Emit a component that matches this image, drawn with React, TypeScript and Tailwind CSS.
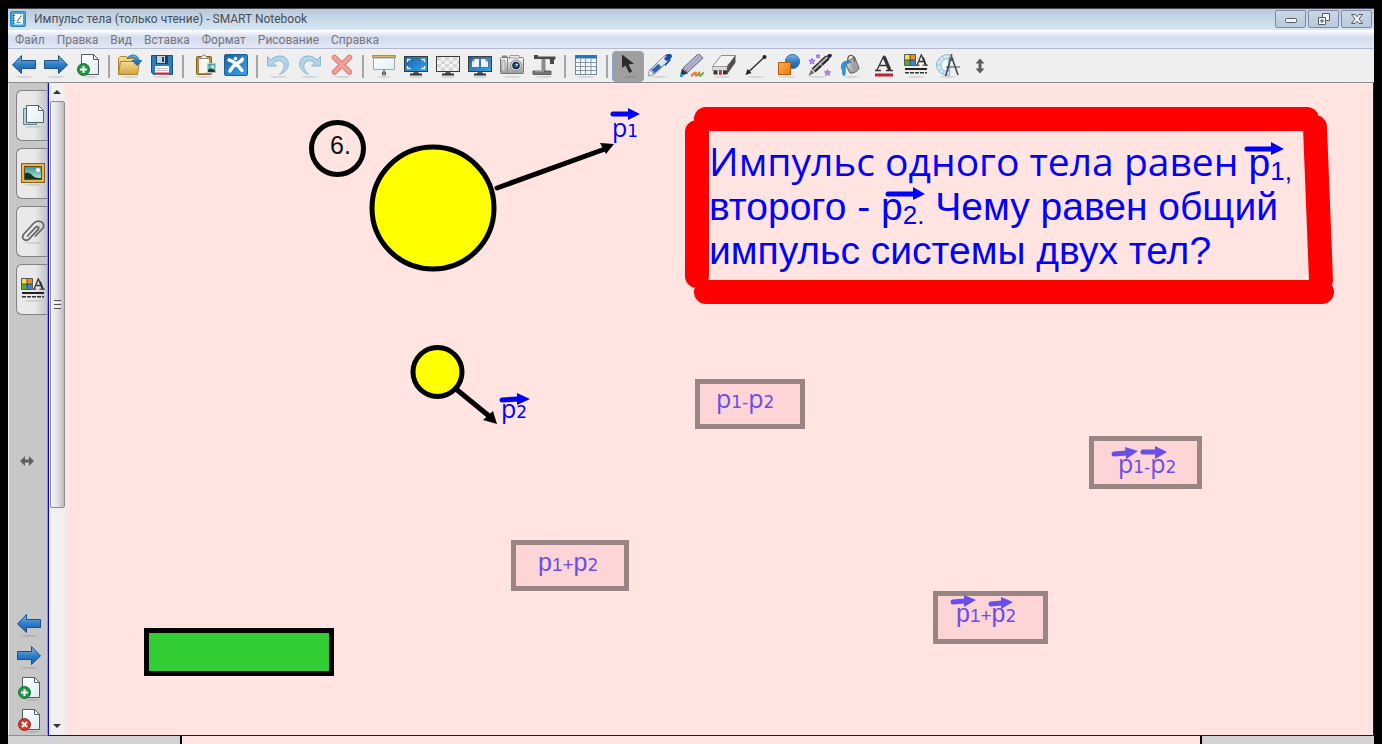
import type { ReactNode } from "react";

type Tool = { name: string; icon: ReactNode; active?: boolean };

const MENU = ["Файл", "Правка", "Вид", "Вставка", "Формат", "Рисование", "Справка"];

function Defs() {
  return (
    <svg className="absolute size-0" aria-hidden="true">
      <defs>
        <linearGradient id="blue" x1="0" y1="0" x2="0" y2="1">
          <stop offset="0" stopColor="#7dbdec" />
          <stop offset="0.5" stopColor="#2f7fc6" />
          <stop offset="1" stopColor="#1a5ea8" />
        </linearGradient>
        <linearGradient id="screen" x1="0" y1="0" x2="1" y2="1">
          <stop offset="0" stopColor="#1560a8" />
          <stop offset="1" stopColor="#3fa2e6" />
        </linearGradient>
        <linearGradient id="paper" x1="0" y1="0" x2="1" y2="1">
          <stop offset="0" stopColor="#ffffff" />
          <stop offset="1" stopColor="#dfeef5" />
        </linearGradient>
        <linearGradient id="orange" x1="0" y1="0" x2="1" y2="1">
          <stop offset="0" stopColor="#ffb347" />
          <stop offset="1" stopColor="#e9790c" />
        </linearGradient>
        <linearGradient id="folder" x1="0" y1="0" x2="0" y2="1">
          <stop offset="0" stopColor="#f8dd90" />
          <stop offset="1" stopColor="#d3a343" />
        </linearGradient>
        <linearGradient id="metal" x1="0" y1="0" x2="0" y2="1">
          <stop offset="0" stopColor="#fafafa" />
          <stop offset="1" stopColor="#9b9b9b" />
        </linearGradient>
        <linearGradient id="sunset" x1="0" y1="0" x2="0" y2="1">
          <stop offset="0" stopColor="#35989f" />
          <stop offset="1" stopColor="#bdebd7" />
        </linearGradient>
      </defs>
    </svg>
  );
}

function Icon({ children }: { children: ReactNode }) {
  return (
    <svg width="24" height="24" viewBox="0 0 24 24" fill="none" aria-hidden="true">
      {children}
    </svg>
  );
}

function Shadow({ cx = 12, rx = 9 }: { cx?: number; rx?: number }) {
  return <ellipse cx={cx} cy="22.8" rx={rx} ry="0.9" fill="#000" opacity="0.12" />;
}

function ArrowIcon({ right }: { right?: boolean }) {
  return (
    <Icon>
      <Shadow />
      <path
        d={
          right
            ? "M23.5 11 14.5 1.500v5H.5v8h14v5z"
            : "M.5 11 9.500 1.500v5h14v8h-14v5z"
        }
        fill="url(#blue)"
        stroke="#1d4f88"
        strokeLinejoin="round"
      />
    </Icon>
  );
}

function PageBadge({ remove }: { remove?: boolean }) {
  return (
    <Icon>
      <Shadow cx={15} rx={7} />
      <path d="M5.5.5h12l5 5v15h-17z" fill="url(#paper)" stroke="#555d60" />
      <path d="M17.5.5v5h5z" fill="#fff" stroke="#555d60" strokeLinejoin="round" />
      <circle cx="7.5" cy="15.5" r="6" fill={remove ? "#d6382e" : "#23954a"} stroke={remove ? "#a8231c" : "#137034"} />
      <path
        d={remove ? "M5 13l5 5M10 13l-5 5" : "M7.5 12v7M4 15.5h7"}
        stroke="#fff"
        strokeWidth="2"
      />
    </Icon>
  );
}

function Monitor({ fill, children }: { fill: string; children?: ReactNode }) {
  return (
    <Icon>
      <Shadow rx={7} />
      <path d="M9.500 17h5v3h-5z" fill="#555" />
      <path d="M6 19.500h12v2H6z" fill="#333" />
      <rect x="0.500" y="2.500" width="23" height="15" fill={fill} stroke="#3b3b3b" />
      {children}
    </Icon>
  );
}

function StyleIcon() {
  return (
    <Icon>
      <Shadow />
      <path d="M1 1h5v5H1z" fill="#f6df5a" />
      <path d="M6 1h5v5H6z" fill="#ef8a1c" />
      <path d="M1 6h5v5H1z" fill="#5cab35" />
      <path d="M6 6h5v5H6z" fill="#3b83d6" />
      <path d="M.5.5h11v11H.5zM6 1v10M1 6h10" stroke="#333" strokeWidth="0.8" />
      <path d="M13 11.200 17.300.8l4.600 10.400M14.500 7.500h5.500" stroke="#333" strokeWidth="1.300" />
      <path d="M19 3.500l2.700 7.500" stroke="#333" strokeWidth="2" />
      <path d="M12 11.200h3.500M18.500 11.200H24" stroke="#333" />
      <path d="M1 15h22" stroke="#222" strokeWidth="2" />
      <path d="M1 18.700h22" stroke="#333" strokeWidth="1.400" strokeDasharray="4 1" />
    </Icon>
  );
}

function Undo({ flip }: { flip?: boolean }) {
  return (
    <Icon>
      <g transform={flip ? "matrix(-1 0 0 1 24 0)" : undefined}>
        <Shadow />
        <path
          d="M1.500 2.500v9.500h9L7.300 8.800c3.500-3.300 9.500-2.800 10.700 1.700.9 3.600-1.300 7.200-4.700 9.900 5.400-1.700 9.500-5.500 9-11.300C21.600 1.200 11.200-.6 4.800 6z"
          fill="#b3d4ea"
          stroke="#8eb4d0"
          strokeLinejoin="round"
        />
      </g>
    </Icon>
  );
}

const toolGroups: Tool[][] = [
  [
    { name: "Предыдущая страница", icon: <ArrowIcon /> },
    { name: "Следующая страница", icon: <ArrowIcon right /> },
    { name: "Добавить страницу", icon: <PageBadge /> },
  ],
  [
    {
      name: "Открыть",
      icon: (
        <Icon>
          <Shadow />
          <path d="M.5 4.500V20.500h19V4.500H10l-1.500-2h-6z" fill="url(#folder)" stroke="#ad8432" />
          <path d="M2.500 7.500h19l-2 13H.5z" fill="url(#folder)" stroke="#ad8432" strokeLinejoin="round" />
          <path d="M9 4.500C12-.5 20-.5 21 6.500h3l-5 5-5-5h3c-.5-4-4.500-4-8-2z" fill="url(#blue)" stroke="#1d5b96" strokeWidth="0.800" />
        </Icon>
      ),
    },
    {
      name: "Сохранить",
      icon: (
        <Icon>
          <Shadow />
          <path d="M1.500 1.500h21v19h-19l-2-2z" fill="#287fc2" stroke="#1a4f80" />
          <path d="M6 2h12v8H6z" fill="#213f5c" />
          <path d="M7 2h8v7H7z" fill="#c6d3dc" />
          <path d="M12 3h2v5h-2z" fill="#213f5c" />
          <path d="M5 12h14v8.500H5z" fill="#fff" />
          <path d="M6.500 14.500h11M6.500 16.500h11" stroke="#aab" strokeWidth="0.800" />
          <path d="M5 18.500h14v2H5z" fill="#d8232f" />
        </Icon>
      ),
    },
  ],
  [
    {
      name: "Вставить",
      icon: (
        <Icon>
          <Shadow />
          <rect x="4.500" y="2.500" width="15" height="18" rx="1" fill="#c08c41" stroke="#8a5d20" />
          <path d="M7 5h10v12l-3 2H7z" fill="#f5f8fa" />
          <path d="M8 4.500c0-1.500 2.500-1.500 3-3.500h2c.5 2 3 2 3 3.500z" fill="#eee" stroke="#777" strokeWidth="0.800" />
          <rect x="15.500" y="9.500" width="8" height="9" fill="url(#sunset)" stroke="#bcc4ca" />
          <path d="M16 16c2-3 4-1 7 0v2h-7z" fill="#173e2e" />
          <circle cx="20.500" cy="12.500" r="1.200" fill="#fff" />
        </Icon>
      ),
    },
    {
      name: "SMART Exchange",
      icon: (
        <Icon>
          <rect x="0.500" y="0.500" width="23" height="21" rx="1.500" fill="url(#screen)" stroke="#225c91" />
          <path d="M5 6c5 1 9 5 13 10.500M6 17c2-4 5-6.500 7.500-8C16 8 17.500 7.500 18.500 5" stroke="#fff" strokeWidth="3.400" strokeLinecap="round" />
          <circle cx="11.500" cy="4.500" r="1.700" fill="#fff" />
        </Icon>
      ),
    },
  ],
  [
    { name: "Отменить", icon: <Undo /> },
    { name: "Повторить", icon: <Undo flip /> },
    {
      name: "Удалить",
      icon: (
        <Icon>
          <Shadow />
          <path d="M4.500 3.500 19.500 18M19.500 3.500 4.500 18" stroke="#d57f76" strokeWidth="5.500" strokeLinecap="round" />
          <path d="M4.500 3.500 19.500 18M19.500 3.500 4.500 18" stroke="#f0a096" strokeWidth="3.800" strokeLinecap="round" />
        </Icon>
      ),
    },
  ],
  [
    {
      name: "Затенение экрана",
      icon: (
        <Icon>
          <path d="M1.500 4h21v11.500h-21z" fill="url(#paper)" stroke="#9aa7ad" />
          <path d="M.5 1.500h23v2H.5z" fill="#dcb873" stroke="#a07b3a" strokeWidth="0.800" />
          <path d="M12 15.500V18" stroke="#444" />
          <circle cx="12" cy="19.500" r="1.500" stroke="#333" strokeWidth="1.200" />
          <Shadow rx={7} />
        </Icon>
      ),
    },
    {
      name: "Полный экран",
      icon: (
        <Monitor fill="url(#screen)">
          <path d="M3.500 8V5.500l3 0M17.500 5.500h3V8M3.500 12v2.500h3M17.500 14.500h3V12" stroke="#fff" strokeWidth="1.300" />
        </Monitor>
      ),
    },
    {
      name: "Прозрачный фон",
      icon: (
        <Monitor fill="#f3f3f3">
          <path
            d="M1 3h4v3.500H1zM9 3h4v3.500H9zM17 3h4v3.500h-4zM5 6.500h4V10H5zM13 6.500h4V10h-4zM21 6.500h2V10h-2zM1 10h4v3.500H1zM9 10h4v3.500H9zM17 10h4v3.500h-4zM5 13.500h4V17H5zM13 13.500h4V17h-4zM21 13.500h2V17h-2z"
            fill="#d6d6d6"
          />
        </Monitor>
      ),
    },
    {
      name: "Две страницы",
      icon: (
        <Monitor fill="url(#screen)">
          <path d="M3.500 13.500V7l2.500-2.500h5.500v9zM12.500 13.500v-9H18L20.500 7v6.500z" fill="#e9f3fa" stroke="#3d6384" strokeWidth="0.800" />
          <path d="M3.500 7H6V4.500M20.500 7H18V4.500" stroke="#3d6384" strokeWidth="0.800" />
        </Monitor>
      ),
    },
    {
      name: "Захват экрана",
      icon: (
        <Icon>
          <Shadow />
          <path d="M2 1.500h5v2H2z" fill="#888" />
          <rect x="0.500" y="3.500" width="23" height="16" rx="1" fill="url(#metal)" stroke="#777" />
          <path d="M2 6h3v11H2z" fill="#dadada" stroke="#8b8b8b" strokeWidth="0.600" />
          <path d="M7.500 4v15" stroke="#8b8b8b" />
          <path d="M10 1.500h9l1 2.500H9z" fill="#ededed" stroke="#888" strokeWidth="0.800" />
          <circle cx="16" cy="11.500" r="5.500" fill="#dcdcdc" stroke="#777" strokeWidth="0.800" />
          <circle cx="16" cy="11.500" r="3.800" fill="#152b44" />
          <circle cx="16" cy="11.500" r="2" fill="#2d71ae" />
          <circle cx="17" cy="10.500" r="0.900" fill="#fff" />
        </Icon>
      ),
    },
    {
      name: "Документ-камера",
      icon: (
        <Icon>
          <Shadow />
          <path d="M2 1h4v1.500h17.500V5l-1.500 1v4h-4V6L17 5H2z" fill="#4a4a4a" />
          <path d="M9.500 5h4v12h-4z" fill="#8c8c8c" />
          <path d="M1 17h18v3.500H1z" fill="#777" stroke="#4a4a4a" strokeWidth="0.800" />
          <path d="M3 17h9" stroke="#c2c2c2" />
        </Icon>
      ),
    },
  ],
  [
    {
      name: "Таблица",
      icon: (
        <Icon>
          <rect x="1.500" y="1.500" width="21" height="19" fill="#f7fbfd" stroke="#718799" />
          <path d="M1 1h22v3.500H1z" fill="#2874bd" />
          <path d="M1.500 8.500h21M1.500 12.500h21M1.500 16.500h21M6.500 4.500v16M11.500 4.500v16M17 4.500v16" stroke="#8397a6" />
          <Shadow />
        </Icon>
      ),
    },
  ],
  [
    {
      name: "Выбрать",
      active: true,
      icon: (
        <Icon>
          <Shadow cx={14} rx={7} />
          <path d="M6 .5V14l3.500-2.500 3.700 7.500 3-1.500-3.700-7 5.500-.8z" fill="#2b2b2b" />
        </Icon>
      ),
    },
    {
      name: "Перо",
      icon: (
        <Icon>
          <Shadow cx={11} />
          <path d="m0 22 1.500-6.500 5 5z" fill="#e3eaf0" stroke="#7c8a98" strokeWidth="0.800" />
          <path d="M4.500 17.500 20 3" stroke="#5b6f8c" strokeWidth="6.800" />
          <path d="M5 17 19.500 3.500" stroke="#d9e5ee" strokeWidth="5.400" />
          <path d="M5 17 11.500 11" stroke="#2d62b0" strokeWidth="5.400" />
          <path d="m19 4 2-1.800" stroke="#1f4d9a" strokeWidth="5.600" strokeLinecap="round" />
          <path d="m4 15 14-13" stroke="#fff" strokeWidth="1.200" opacity="0.700" />
          <path d="M22.500 5.500 17 11.500" stroke="#1f4d9a" strokeWidth="1.400" />
        </Icon>
      ),
    },
    {
      name: "Художественное перо",
      icon: (
        <Icon>
          <path d="m0 22 2-7.500 6 5z" fill="#2e3a44" />
          <path d="M5 16.500 21 1.500" stroke="#4d5a64" strokeWidth="7" />
          <path d="M5.500 16 20.500 2" stroke="#a9c3c6" strokeWidth="5.600" />
          <path d="M5.500 16 20.500 2" stroke="#b79bd8" strokeWidth="2.400" />
          <path d="M0 21.500h3" stroke="#2a98d4" strokeWidth="3" />
          <path d="M11 22c2-1 3-4 4.500-3.500s-1.500 3.500 1 3 2-3.500 3.500-3" stroke="#e97c22" strokeWidth="2" />
          <path d="M19 19c1 0-.5 3 1.200 2.700s2-3.200 4-2.700" stroke="#5bb04c" strokeWidth="2" />
        </Icon>
      ),
    },
    {
      name: "Ластик",
      icon: (
        <Icon>
          <Shadow cx={10} />
          <path d="M.5 12.500 9 1.500h14.500L15 12.500z" fill="#f2f2ee" stroke="#8c8c88" />
          <path d="M15 12.500 23.500 1.500v7L15 20.500z" fill="#50504e" />
          <path d="M.5 12.500H15v4H.5z" fill="#ddddd8" stroke="#8c8c88" strokeWidth="0.600" />
          <path d="M1.500 16.500h13.500v4H1.500z" fill="#333" />
          <path d="M5.500 16.500h1.500v4H5.500zM9.500 16.500H11v4H9.500z" fill="#fff" />
          <path d="M7 16.500h2.500v4H7z" fill="#d92626" />
        </Icon>
      ),
    },
    {
      name: "Линия",
      icon: (
        <Icon>
          <path d="M4 18.500 20.500 3" stroke="#222" strokeWidth="1.300" />
          <circle cx="20.500" cy="3" r="2" fill="#222" />
          <path d="m1.500 21 2-6 4 4z" fill="#222" />
          <Shadow />
        </Icon>
      ),
    },
    {
      name: "Фигуры",
      icon: (
        <Icon>
          <Shadow cx={11} />
          <circle cx="16.500" cy="7.500" r="7" fill="url(#blue)" stroke="#2b65a0" />
          <rect x="2.500" y="8.500" width="12" height="12" fill="url(#orange)" stroke="#b95f0b" />
        </Icon>
      ),
    },
    {
      name: "Волшебное перо",
      icon: (
        <Icon>
          <Shadow cx={9} />
          <path d="m.5 22 2.500-6.500 3.500 3.500z" fill="#777" />
          <path d="m5.500 16.500 14-13" stroke="#2a2a2a" strokeWidth="5.600" />
          <path d="m19 4 3-2.500" stroke="#2a2a2a" strokeWidth="3.600" strokeLinecap="round" />
          <path d="m5.500 16 14-13" stroke="#b5b5b5" strokeWidth="1.800" />
          <path d="m11 8.500 4 4" stroke="#ddd" />
          <path
            d="m4 4 .9 2.100 2.300.2-1.800 1.500.6 2.200-2-1.200L2 10l.6-2.200L.8 6.300l2.300-.2zM10 0l.6 1.400 1.600.1-1.200 1 .4 1.500-1.400-.8-1.400.8.4-1.500-1.200-1 1.600-.1zM19.500 15.500l.9 2.100 2.300.2-1.800 1.500.6 2.200-2-1.200-2 1.200.6-2.200-1.800-1.500 2.300-.2z"
            fill="#b58cf0"
            stroke="#7b4ecb"
            strokeWidth="0.600"
          />
        </Icon>
      ),
    },
    {
      name: "Заливка",
      icon: (
        <Icon>
          <Shadow cx={12} rx={8} />
          <path d="m5 9 9.500-6 4.500 11c-1 3-5 5.500-9 5z" fill="url(#metal)" stroke="#555" />
          <path d="m9 8 5 9c2-1 4-2 5-4L14.500 3z" fill="#8a8a8a" opacity="0.600" />
          <path d="M8 7.500C7 3 9.500.5 12 1.500s2.500 4 2.500 6.500" stroke="#555" strokeWidth="1.200" />
          <path d="M2.500 9c2-2.500 7-2.500 8.500-1-2 1-5 2-5.500 5s.5 8.500-1.500 8.500S3 17 2 15.500 1 11 2.500 9z" fill="#3493dc" stroke="#1b67ad" strokeWidth="0.600" />
        </Icon>
      ),
    },
    {
      name: "Текст",
      icon: (
        <Icon>
          <path d="M5 16 12 1.500" stroke="#333" strokeWidth="1.300" />
          <path d="m12 2.500 5.800 13.500" stroke="#333" strokeWidth="3.200" />
          <path d="M7 11.500h8M3 16.500h6M14 16.500h7" stroke="#333" strokeWidth="1.300" />
          <path d="M3 19.500h18v3H3z" fill="#c2202e" />
        </Icon>
      ),
    },
    { name: "Свойства", icon: <StyleIcon /> },
    {
      name: "Измерительные инструменты",
      icon: (
        <Icon>
          <Shadow />
          <path d="M13.500.5C6 .5.500 5 .500 11s5.500 10.500 13 10.500z" fill="#d3e9f6" stroke="#8ab7d3" />
          <path d="M12.500 4.500C8 4.500 5 7.500 5 11s3 6.500 7.500 6.500z" fill="#f3f9fc" stroke="#8ab7d3" />
          <path d="m2.500 5 3 2M6 2l2 3M.8 11H5M2.500 17l3-2M6 20l2-3" stroke="#8ab7d3" strokeWidth="0.800" />
          <path d="M15.500 0v4M15 4 9.500 22M16 4l6 17" stroke="#454a50" strokeWidth="1.600" />
          <path d="M10 13h14" stroke="#454a50" />
          <circle cx="15.500" cy="5" r="2" fill="#555" />
        </Icon>
      ),
    },
    {
      name: "Переместить панель",
      icon: (
        <Icon>
          <path d="m12 4.500 4.500 5h-3v5h3L12 19.500l-4.500-5h3v-5h-3z" fill="#5e5e5e" />
        </Icon>
      ),
    },
  ],
];

const tabs: Tool[] = [
  {
    name: "Сортировщик страниц",
    icon: (
      <Icon>
        <Shadow />
        <path d="M2.500 4.500h13v16h-13z" fill="#a6d7e4" stroke="#4f8797" />
        <path d="M5.500 1.500h12l5 5v12h-17z" fill="url(#paper)" stroke="#566165" />
        <path d="M17.500 1.500v5h5z" fill="#fff" stroke="#566165" strokeLinejoin="round" />
      </Icon>
    ),
  },
  {
    name: "Галерея",
    icon: (
      <Icon>
        <rect x="0.500" y="1.500" width="23" height="19" fill="#d79d35" stroke="#8d6114" />
        <path d="M2 3h20v16H2z" stroke="#f4cd78" />
        <rect x="3.500" y="4.500" width="17" height="13" fill="url(#sunset)" stroke="#734e12" />
        <path d="M4 11c4-1 6 1 8 3s5 2 8 2v1H4z" fill="#12351f" />
        <circle cx="17" cy="8" r="2" fill="#fff" />
        <Shadow />
      </Icon>
    ),
  },
  {
    name: "Вложения",
    icon: (
      <Icon>
        <path
          d="m6.500 16 8-8.500c2-2 4.500 0 2.500 2.200l-8.500 9c-3.500 3.500-9 0-6-4.200L12.500 3.500c4.500-5 12.500-1 9.500 4.500L14.500 16"
          stroke="#696969"
          strokeWidth="1.800"
          strokeLinecap="round"
        />
        <Shadow />
      </Icon>
    ),
  },
  { name: "Свойства", icon: <StyleIcon /> },
];

const pageTools: Tool[] = [
  { name: "Предыдущая страница", icon: <ArrowIcon /> },
  { name: "Следующая страница", icon: <ArrowIcon right /> },
  { name: "Добавить страницу", icon: <PageBadge /> },
  { name: "Удалить страницу", icon: <PageBadge remove /> },
];

function TitleBar() {
  const box =
    "flex h-[18px] w-[31px] items-center justify-center rounded-xs border border-[#7f8ba9] bg-linear-to-b from-[#c9d7e5] to-[#b9cadb]";
  return (
    <header className="flex h-[22px] shrink-0 items-center border-t border-[#45484c] bg-linear-to-b from-[#bac9da] to-[#d8e7f4] px-0.5 pb-px">
      <svg width="16" height="16" viewBox="0 0 16 16" aria-hidden="true">
        <rect x="0.500" y="0.500" width="15" height="15" rx="1" fill="#41a5db" stroke="#2b86bb" />
        <path d="M4 3h9v10.500H4z" fill="#fff" />
        <path d="M3 4.500h2M3 7h2M3 9.500h2M3 12h2" stroke="#28688f" />
        <path d="m7 10.500 4.500-6M6.500 11.500h4" stroke="#2e8dc5" strokeWidth="1.200" />
      </svg>
      <h1 className="ml-2 grow text-xs text-[#474e58]">Импульс тела (только чтение) - SMART Notebook</h1>
      <div className="flex gap-0.5">
        <button className={box} aria-label="Свернуть">
          <svg width="12" height="12" viewBox="0 0 12 12">
            <rect x="0.500" y="5.500" width="11" height="4" rx="1" fill="#f5f5f5" stroke="#565b68" />
          </svg>
        </button>
        <button className={box} aria-label="Восстановить">
          <svg width="12" height="12" viewBox="0 0 12 12" fill="#f5f5f5" stroke="#565b68">
            <path d="M4.500.5h7v7h-7z" />
            <path d="M.5 4.500h7v7h-7z" />
            <path d="M3 7h2v2H3z" fill="#b9c9da" />
          </svg>
        </button>
        <button className={box} aria-label="Закрыть">
          <svg width="12" height="12" viewBox="0 0 12 12">
            <path d="M.5 1.500h3.500L6 3.800l2-2.300h3.500L8 6l3.500 4.500H8L6 8.200l-2 2.300H.5L4 6z" fill="#f5f5f5" stroke="#565b68" />
          </svg>
        </button>
      </div>
    </header>
  );
}

function Toolbar() {
  return (
    <div className="flex h-[34px] shrink-0 items-center border-b border-[#8e8e8e] bg-[#efefef] pt-px">
      {toolGroups.map((group, i) => (
        <div key={i} className="flex items-center">
          {i > 0 && <span className="mx-1 h-[23px] w-0.5 bg-[#a6a6a6]" />}
          {group.map((tool) => (
            <button
              key={tool.name}
              aria-label={tool.name}
              className={
                tool.active
                  ? "flex h-[31px] w-8 items-center justify-center rounded-sm border border-[#86a9cb] bg-[#9f9f9f]"
                  : "flex h-[31px] w-8 items-center justify-center"
              }
            >
              {tool.icon}
            </button>
          ))}
        </div>
      ))}
    </div>
  );
}

function Sidebar() {
  return (
    <aside className="flex w-10 shrink-0 flex-col justify-between border-r border-b border-l border-r-[#9a9a9a] border-b-[#8e8e8e] border-l-[#eeeeee] bg-[#c7c7c7] pt-[7px]">
      <div className="flex flex-col gap-[7px] pl-[7px]">
        {tabs.map((tab) => (
          <button
            key={tab.name}
            aria-label={tab.name}
            className="flex h-[51px] items-center justify-center rounded-l-md border border-r-0 border-[#828282] bg-linear-to-r from-[#e9e9e9] from-60% to-[#c4c4c4] pl-0.5"
          >
            {tab.icon}
          </button>
        ))}
      </div>
      <button aria-label="Изменить ширину" className="flex justify-center pr-0.5">
        <svg width="14" height="10" viewBox="0 0 14 10">
          <path d="m0 5 5-5v3.500h4V0l5 5-5 5V6.500H5V10z" fill="#606060" />
        </svg>
      </button>
      <div className="flex flex-col pl-2">
        {pageTools.map((tool) => (
          <button key={tool.name} aria-label={tool.name} className="flex h-8 items-center pt-1">
            {tool.icon}
          </button>
        ))}
      </div>
    </aside>
  );
}

function ScrollBar() {
  return (
    <div className="flex w-4 shrink-0 flex-col bg-[#f0f0f0]">
      <button aria-label="Вверх" className="flex h-[18px] items-center justify-center">
        <svg width="8" height="4" viewBox="0 0 8 4">
          <path d="m0 4 4-4 4 4z" fill="#333" />
        </svg>
      </button>
      <div className="min-h-0 grow">
        <div className="ml-px flex h-[66%] flex-col items-center justify-center gap-px rounded-xs border border-[#8e8e8e] bg-linear-to-r from-[#f4f4f4] via-[#e2e2e6] to-[#bcbcc0]">
          <span className="h-px w-[7px] bg-[#555]" />
          <span className="h-px w-[7px] bg-[#fff]" />
          <span className="h-px w-[7px] bg-[#555]" />
          <span className="h-px w-[7px] bg-[#fff]" />
          <span className="h-px w-[7px] bg-[#555]" />
        </div>
      </div>
      <button aria-label="Вниз" className="flex h-[18px] items-center justify-center">
        <svg width="8" height="4" viewBox="0 0 8 4">
          <path d="m0 0 4 4 4-4z" fill="#333" />
        </svg>
      </button>
    </div>
  );
}

// "comic" uses the rounder face with a footed 1
function Formula({ parts, comic }: { parts: string[]; comic?: boolean }) {
  return (
    <span
      className={
        comic
          ? "flex items-baseline font-['Open_Sans',sans-serif] text-[25px] leading-7"
          : "flex items-baseline font-['Liberation_Sans',sans-serif] text-[25px] leading-7"
      }
    >
      {parts.map((sub) => (
        <span key={sub}>
          p
          <span
            className={
              comic || sub === "2"
                ? "font-['DejaVu_Sans',sans-serif] text-[17px] leading-none"
                : "text-[19px] leading-none"
            }
          >
            {sub}
          </span>
        </span>
      ))}
    </span>
  );
}

function Drawing() {
  return (
    <svg className="absolute inset-0 size-full" fill="none" strokeLinecap="round" aria-hidden="true">
      <g stroke="#ff0000" strokeWidth="24">
        <path d="M641 36h601M632 49v144M641 209h616M1250 44l6 153" />
      </g>
      <g stroke="#000" strokeWidth="5">
        <circle cx="272.500" cy="65.500" r="26" />
        <circle cx="368" cy="125" r="61" fill="#ffff00" />
        <circle cx="372.500" cy="289" r="24.500" fill="#ffff00" />
        <path d="m432 105 108-39M391 306l33 27" />
      </g>
      <path d="m549 61-14-1 6 11zM432 341l-14-4 10-9z" fill="#000" />
      <g stroke="#0000ff" strokeWidth="5">
        <path d="M548 31h16M437 317l16-1M1182 66h25M823 111h26" />
      </g>
      <path
        d="M563 25v12l12-6zM452 310v12l13-6zM1206 59v13l13-6zM848 104v13l12-6z"
        fill="#0000ff"
      />
    </svg>
  );
}

function AnswerArrows() {
  return (
    <svg className="absolute inset-0 size-full" fill="none" strokeLinecap="round" aria-hidden="true">
      <path d="m1049 371 13-1M1078 369h13M888 519l12-1M926 521l11-1" stroke="#684eec" strokeWidth="5" />
      <path
        d="m1060 364 1 12 12-8zM1090 363v13l12-7zM899 512v12l12-7zM936 514v12l12-7z"
        fill="#684eec"
      />
    </svg>
  );
}

function Canvas() {
  const card = "absolute border-[5px] border-[#998583] bg-[#fed5d7] text-[#684eec]";
  return (
    <main className="relative grow overflow-hidden bg-[#ffe4e1]">
      <Drawing />
      <p className="absolute top-[46px] left-[265px] font-['Liberation_Sans',sans-serif] text-[25px] leading-8 text-[#111]">
        6.
      </p>
      <div className="absolute top-[30px] left-[547px] text-[#0000ff]">
        <Formula parts={["1"]} comic />
      </div>
      <div className="absolute top-[311px] left-[436px] text-[#0000ff]">
        <Formula parts={["2"]} comic />
      </div>

      <div className="absolute top-[58px] left-[644px] font-['Liberation_Sans',sans-serif] text-[39px] leading-[44px] whitespace-nowrap text-[#0000ff]">
        <p>
          <span className="font-['Open_Sans',sans-serif] leading-none font-medium">Импульс одного тела равен </span>p
          <span className="relative top-1 text-[26px] leading-none">1,</span>
        </p>
        <p>
          второго - p<span className="relative top-1 text-[26px] leading-none">2.</span> Чему равен общий
        </p>
        <p>импульс системы двух тел?</p>
      </div>

      <div className={`${card} top-[296px] left-[630px] h-[50px] w-[110px] pl-4`}>
        <Formula parts={["1-", "2"]} comic />
      </div>
      <div className={`${card} top-[353px] left-[1024px] h-[53px] w-[113px] pt-2 pl-6`}>
        <Formula parts={["1-", "2"]} comic />
      </div>
      <div className={`${card} top-[457px] left-[446px] h-[51px] w-[118px] pt-[3px] pl-[22px]`}>
        <Formula parts={["1+", "2"]} />
      </div>
      <div className={`${card} top-[508px] left-[868px] h-[53px] w-[115px] pt-[3px] pl-[18px]`}>
        <Formula parts={["1+", "2"]} />
      </div>
      <AnswerArrows />

      <div className="absolute top-[545px] left-[79px] h-12 w-[190px] border-[5px] border-black bg-[#32cd32]" />
    </main>
  );
}

export default function App() {
  return (
    <div className="flex h-screen flex-col overflow-hidden bg-black px-2 pt-2 font-[Roboto,sans-serif]">
      <Defs />
      <TitleBar />
      <nav className="flex h-[19px] shrink-0 items-center border-b border-[#b3bad0] bg-linear-to-b from-white from-0% via-[#d5dcee] via-40% to-[#e1e7f6] pt-0.5 pl-px">
        {MENU.map((item) => (
          <button key={item} className="px-1.5 text-xs text-[#74757c]">
            {item}
          </button>
        ))}
      </nav>
      <Toolbar />
      <div className="flex min-h-0 grow">
        <Sidebar />
        <div className="flex min-w-0 grow border-r border-b border-l border-[#0000ff]">
          <ScrollBar />
          <Canvas />
        </div>
      </div>
      <footer className="flex h-2 shrink-0 bg-[#d3d3d3]">
        <div className="mx-[172px] grow border-x-2 border-black bg-[#ffe4e1]" />
      </footer>
    </div>
  );
}
